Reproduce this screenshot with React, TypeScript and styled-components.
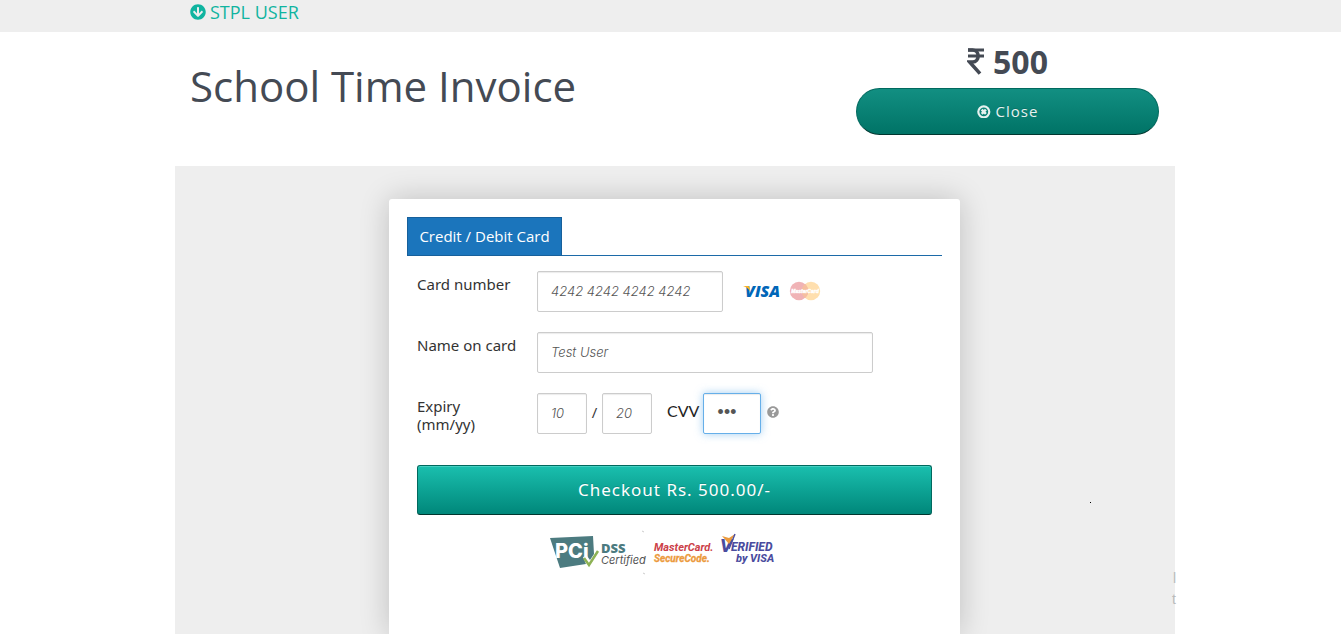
import React from 'react';
import styled, { createGlobalStyle } from 'styled-components';
import { FaArrowCircleDown, FaQuestionCircle } from 'react-icons/fa';

const GlobalStyle = createGlobalStyle`
  *, *::before, *::after { box-sizing: border-box; }
  body {
    margin: 0;
    background: #fff;
    color: #444a54;
    font-family: 'Open Sans', 'Noto Sans', sans-serif;
  }
`;

const Page = styled.div`
  display: flex;
  flex-direction: column;
  min-height: 100vh;
  overflow: hidden;
`;

const Container = styled.div`
  width: 100%;
  max-width: 1009px;
  margin: 0 auto;
  padding-left: 9px;
`;

const TopBar = styled.nav`
  height: 32px;
  background: #eee;
`;

const UserLink = styled.a`
  display: inline-flex;
  align-items: center;
  gap: 4px;
  margin-left: 15px;
  color: #10b4a0;
  font-size: 18px;
  line-height: 24px;
  text-decoration: none;
`;

const Header = styled.header`
  display: flex;
  align-items: flex-start;
  justify-content: space-between;
  min-height: 134px;
  padding: 10px 16px 0 15px;
`;

const Title = styled.h1`
  margin: 14px 0 0;
  font-size: 42px;
  font-weight: 400;
  line-height: 60px;
`;

const Summary = styled.div`
  width: 303px;
  text-align: center;
`;

const Amount = styled.p`
  display: flex;
  align-items: center;
  justify-content: center;
  gap: 8px;
  margin: 0 0 6px;
  font-size: 32px;
  font-weight: 700;
  line-height: 40px;
`;

const Button = styled.button<{ $round?: boolean }>`
  display: flex;
  align-items: center;
  justify-content: center;
  gap: 5px;
  width: 100%;
  height: ${(p) => (p.$round ? 47 : 50)}px;
  padding: 0 0 2px;
  border: 1px solid #00695e;
  border-bottom-color: #00362f;
  border-radius: ${(p) => (p.$round ? 24 : 3)}px;
  background: ${(p) =>
    p.$round
      ? 'linear-gradient(#128f82, #007366)'
      : 'linear-gradient(#1abfae, #00877a)'};
  box-shadow: ${(p) => (p.$round ? 'none' : 'inset 0 1px 0 #45cfc1')};
  color: ${(p) => (p.$round ? '#e6f2f0' : '#fff')};
  font-family: ${(p) =>
    p.$round ? "'Open Sans', sans-serif" : "'Noto Sans', sans-serif"};
  font-size: ${(p) => (p.$round ? 15 : 17)}px;
  letter-spacing: 1px;
  text-shadow: 0 -1px 0 rgba(0, 0, 0, 0.15);
  cursor: pointer;
`;

const Main = styled(Container)`
  display: flex;
  flex: 1;
`;

const Panel = styled.main`
  position: relative;
  display: flex;
  flex: 1;
  justify-content: center;
  padding-top: 33px;
  background: #eee;
`;

const Card = styled.section`
  width: 571px;
  margin-right: 1px;
  padding: 18px 18px 60px;
  border-radius: 3px 3px 0 0;
  background: #fff;
  box-shadow: 0 0 30px rgba(0, 0, 0, 0.2);
`;

const Tabs = styled.div`
  display: flex;
  height: 39px;
  border-bottom: 1px solid #1c6aa8;
`;

const Tab = styled.button`
  width: 155px;
  height: 39px;
  padding: 0 0 2px;
  border: 1px solid #17609b;
  background: #1b75bc;
  color: #fff;
  font-family: 'Open Sans', sans-serif;
  font-size: 15px;
`;

const Form = styled.form`
  padding: 15px 10px 0;
`;

const Row = styled.div`
  display: flex;
  align-items: flex-start;
  margin-bottom: 20px;
`;

const Label = styled.label<{ $narrow?: boolean }>`
  flex: none;
  width: 120px;
  padding: 4px ${(p) => (p.$narrow ? 40 : 0)}px 0 0;
  color: #333;
  font-family: 'Noto Sans', sans-serif;
  font-size: 15px;
  line-height: 18px;
`;

const Fields = styled.div`
  display: flex;
  align-items: center;
  color: #333;
  font-size: 15px;
`;

const Input = styled.input<{ $width: number; $active?: boolean }>`
  width: ${(p) => p.$width}px;
  height: 41px;
  padding: 0 12px 2px 13px;
  border: 1px solid ${(p) => (p.$active ? '#66afe9' : '#ccc')};
  border-radius: 2px;
  outline: none;
  background: #fff;
  box-shadow: inset 0 1px 1px rgba(0, 0, 0, 0.08)
    ${(p) => (p.$active ? ', 0 0 8px rgba(102, 175, 233, 0.6)' : '')};
  color: #555;
  font-family: Inter, 'Liberation Sans', sans-serif;
  font-size: 13px;
  font-style: italic;
  font-weight: 300;

  &[type='password'] {
    font-family: 'Liberation Sans', Arial, sans-serif;
    font-size: 18px;
  }
`;

const Slash = styled.span`
  width: 15px;
  padding-bottom: 4px;
  text-align: center;
`;

const CvvLabel = styled.label`
  margin: 0 4px 6px 15px;
  color: #222;
  font-family: Lato, sans-serif;
  font-size: 16px;
`;

const HelpIcon = styled(FaQuestionCircle)`
  margin-left: 6px;
  margin-bottom: 3px;
  color: #999;
  font-size: 12px;
`;

const CardBrands = styled.div`
  display: flex;
  gap: 8px;
  margin: 0 0 1px 20px;
`;

const Submit = styled.div`
  padding-top: 11px;
`;

const Badges = styled.div`
  display: flex;
  justify-content: center;
  margin: 12px 23px 0 0;
`;

const Stray = styled.div`
  position: absolute;
  right: -1px;
  top: 402px;
  width: 5px;
  color: #bbb;
  font-family: 'Liberation Sans', sans-serif;
  font-size: 14px;
  line-height: 21px;
  text-align: right;
`;

const Speck = styled.span`
  position: absolute;
  right: 84px;
  top: 336px;
  width: 1px;
  height: 1px;
  background: #000;
`;

const RupeeIcon = () => (
  <svg width="18" height="28" viewBox="0 0 18 28" fill="none" stroke="#444a54" aria-hidden="true">
    <path d="M1 2H17M1 8H17" strokeWidth="3" />
    <path d="M1 2H5.5C13 2 13 14 5.5 14H2.6L13 25.6" strokeWidth="3.6" />
  </svg>
);

const CloseIcon = () => (
  <svg width="14" height="14" viewBox="0 0 14 14" fill="none" stroke="currentColor" aria-hidden="true">
    <circle cx="6.8" cy="7.8" r="5.5" strokeWidth="2.2" />
    <path d="M4.7 5.7L8.9 9.9M8.9 5.7L4.7 9.9" strokeWidth="2.6" />
  </svg>
);

const VisaLogo = () => (
  <svg width="38" height="20" viewBox="0 0 38 20" role="img" aria-label="Visa">
    <text x="2" y="16" fontFamily="Open Sans" fontSize="16" fontWeight="800" fontStyle="italic" fill="#0066b8">VISA</text>
    <path d="M0 5H4.5C6 5 6.4 5.6 6.7 7L7.2 10.5C5.8 8 3.8 6.3 0 5Z" fill="#f9b223" />
  </svg>
);

const MasterCardLogo = () => (
  <svg width="32" height="20" viewBox="0 0 32 20" role="img" aria-label="MasterCard">
    <circle cx="22" cy="10" r="9.2" fill="#ffdfae" />
    <circle cx="10" cy="10" r="9.2" fill="#f0b3b6" />
    <path d="M16 3A9.2 9.2 0 0 1 16 17A9.2 9.2 0 0 1 16 3Z" fill="#f6bf9f" />
    <text x="16" y="12" textAnchor="middle" fontFamily="Liberation Sans" fontSize="5" fontWeight="700" fontStyle="italic" fill="#fff" stroke="#fff" strokeWidth="0.4">MasterCard</text>
  </svg>
);

const SecurityLogos = () => (
  <svg width="228" height="48" viewBox="0 0 228 48" role="img" aria-label="PCI DSS Certified, MasterCard SecureCode, Verified by Visa">
    <path d="M1 11L44 9L45 27L41 33L38 29L34 30L37 37L11 41Z" fill="#4c7b80" />
    <text x="6" y="31" fontFamily="Inter" fontSize="20" fontWeight="800" fill="#fff">PCi</text>
    <path d="M35 31L40 38L49 24" fill="none" stroke="#8db255" strokeWidth="2.5" />
    <text x="52" y="26" fontFamily="Open Sans" fontSize="13" fontWeight="800" fill="#4c7b80">DSS</text>
    <text x="52" y="37" fontFamily="Inter" fontSize="11" fontStyle="italic" fill="#555">Certified</text>
    <g fontFamily="Roboto" fontWeight="700" fontStyle="italic">
      <text x="105" y="24" fontSize="11" fill="#cc4149">MasterCard.</text>
      <text x="105" y="35" fontSize="10" fill="#ec9a3d" stroke="#ec9a3d" strokeWidth="0.3">SecureCode.</text>
    </g>
    <g fontFamily="Roboto" fontWeight="800" fontStyle="italic" fill="#4a4c9e">
      <text x="171" y="25" fontSize="19">V</text>
      <text x="182" y="24" fontSize="12">ERIFIED</text>
      <text x="187" y="35" fontSize="11">by VISA</text>
    </g>
    <path d="M173 9L180 11L186 7L180 17Z" fill="#ec9a3d" />
    <path d="M186 7L180 22" fill="none" stroke="#4a4c9e" strokeWidth="1.4" />
    <path d="M93 4l2 1M94 46l2 1" stroke="#ccc" />
  </svg>
);

export default function App() {
  return (
    <Page>
      <GlobalStyle />
      <TopBar>
        <Container>
          <UserLink href="#user">
            <FaArrowCircleDown size={16} />
            STPL USER
          </UserLink>
        </Container>
      </TopBar>
      <Container>
        <Header>
          <Title>School Time Invoice</Title>
          <Summary>
            <Amount>
              <RupeeIcon />
              500
            </Amount>
            <Button type="button" $round>
              <CloseIcon />
              Close
            </Button>
          </Summary>
        </Header>
      </Container>
      <Main>
        <Panel>
          <Card>
            <Tabs>
              <Tab type="button">Credit / Debit Card</Tab>
            </Tabs>
            <Form onSubmit={(e) => e.preventDefault()}>
              <Row>
                <Label htmlFor="number">Card number</Label>
                <Fields>
                  <Input id="number" $width={186} defaultValue="4242 4242 4242 4242" />
                  <CardBrands>
                    <VisaLogo />
                    <MasterCardLogo />
                  </CardBrands>
                </Fields>
              </Row>
              <Row>
                <Label htmlFor="name">Name on card</Label>
                <Input id="name" $width={336} defaultValue="Test User" />
              </Row>
              <Row>
                <Label htmlFor="month" $narrow>Expiry (mm/yy)</Label>
                <Fields>
                  <Input id="month" $width={50} defaultValue="10" />
                  <Slash>/</Slash>
                  <Input id="year" aria-label="Expiry year" $width={50} defaultValue="20" />
                  <CvvLabel htmlFor="cvv">CVV</CvvLabel>
                  <Input id="cvv" type="password" $width={58} $active defaultValue="123" />
                  <HelpIcon />
                </Fields>
              </Row>
              <Submit>
                <Button type="submit">Checkout Rs. 500.00/-</Button>
              </Submit>
            </Form>
            <Badges>
              <SecurityLogos />
            </Badges>
          </Card>
          <Speck />
          <Stray>l t</Stray>
        </Panel>
      </Main>
    </Page>
  );
}
